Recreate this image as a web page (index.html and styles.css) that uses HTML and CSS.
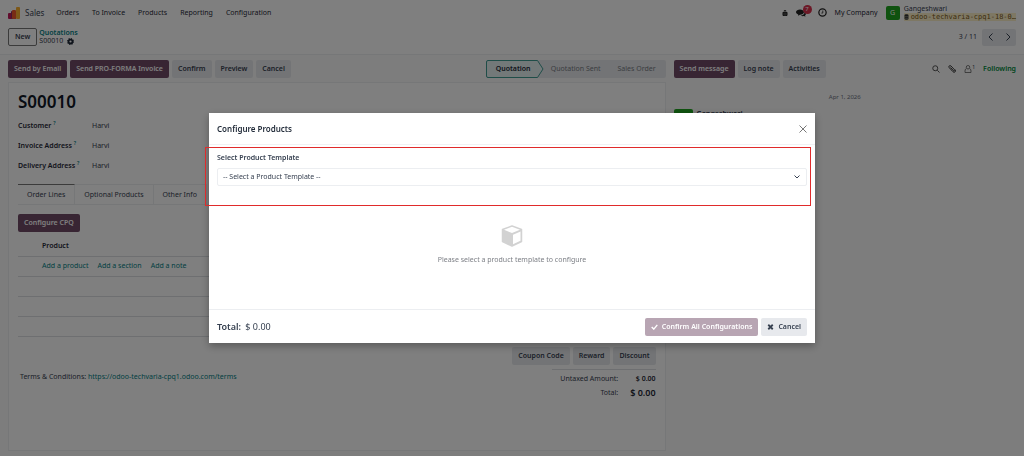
FILE: index.html
```
<!DOCTYPE html>
<html lang="en">
<head>
  <meta charset="UTF-8">
  <meta name="viewport" content="width=device-width, initial-scale=1">
  <title>Odoo - S00010</title>
  <link rel="stylesheet" href="styles.css">
</head>
<body>

<header class="navbar">
  <svg class="app-logo" viewBox="0 0 12 12">
    <rect x="0" y="6" width="4" height="6" rx="1" fill="#c2185b"/>
    <rect x="3" y="4" width="5" height="8" rx="1" fill="#8e2a5c"/>
    <rect x="4" y="3" width="4" height="9" rx="1" fill="#f0592a"/>
    <rect x="8" y="0" width="4" height="12" rx="1" fill="#fbb130"/>
  </svg>
  <a class="app-name" href="#">Sales</a>
  <nav class="menu">
    <a href="#">Orders</a>
    <a href="#">To Invoice</a>
    <a href="#">Products</a>
    <a href="#">Reporting</a>
    <a href="#">Configuration</a>
  </nav>
  <div class="systray">
    <button class="icon-btn" aria-label="Debug">
      <svg class="icon-bug" viewBox="0 0 12 14"><path d="M3 4a3 3 0 0 1 6 0zM2 5h8l1 1v5l-1 2H2l-1-2V6z" fill="#222"/><path d="M6 6v7M1 9h10" stroke="#777" stroke-width="1"/></svg>
    </button>
    <button class="icon-btn chat" aria-label="Messages">
      <svg class="icon-chat" viewBox="0 0 20 16"><path d="M8 1c4 0 8 2 8 5s-4 5.500-8 5.500L4 13.500 4.500 11C2 10 0 8.500 0 6c0-3 4-5 8-5z" fill="#222"/><path d="M17.500 6c0 4-4 6.500-8 7 2 1.500 5 1.500 6.500 1l3 1.500-1-2.500c3-2 2-5-.5-7z" fill="#222"/></svg>
      <span class="badge">7</span>
    </button>
    <button class="icon-btn" aria-label="Activities">
      <svg class="icon-clock" viewBox="0 0 16 16" fill="none" stroke="#222"><circle cx="8" cy="8" r="6.500" stroke-width="2.200"/><path d="M8.500 4.500V9H6" stroke-width="1.400"/></svg>
    </button>
    <a class="company" href="#">My Company</a>
    <span class="avatar">G</span>
    <div class="user">
      <span>Gangeshwari</span>
      <span class="db"><svg class="icon-db" viewBox="0 0 10 12"><path d="M1 2c0-2 8-2 8 0v8c0 2-8 2-8 0z" fill="#333"/><path d="M1 4.500c2 1 6 1 8 0M1 8c2 1 6 1 8 0" stroke="#bba" fill="none"/></svg>odoo-techvaria-cpq1-18-0…</span>
    </div>
  </div>
</header>

<div class="control-panel">
  <button class="btn btn-outline">New</button>
  <div class="breadcrumb">
    <a href="#">Quotations</a>
    <span class="current">S00010
      <svg class="icon-gear" viewBox="0 0 16 16"><circle cx="8" cy="8" r="4.500" fill="none" stroke="#1f2937" stroke-width="4"/><circle cx="8" cy="8" r="6.800" fill="none" stroke="#1f2937" stroke-width="2.400" stroke-dasharray="2.670 2.670"/></svg>
    </span>
  </div>
  <div class="pager">
    <span>3 / 11</span>
    <div class="pager-buttons">
      <button aria-label="Previous"><svg viewBox="0 0 8 8"><path d="M5.500 0.500L2 4l3.500 3.500"/></svg></button>
      <button aria-label="Next"><svg viewBox="0 0 8 8"><path d="M2.500 0.500L6 4 2.500 7.500"/></svg></button>
    </div>
  </div>
</div>

<main class="content">
  <section class="form-view">
    <div class="statusbar">
      <button class="btn btn-primary">Send by Email</button>
      <button class="btn btn-primary">Send PRO-FORMA Invoice</button>
      <button class="btn">Confirm</button>
      <button class="btn">Preview</button>
      <button class="btn">Cancel</button>
      <div class="stages">
        <span class="stage active">
          <svg class="stage-arrow" viewBox="0 0 58 18" preserveAspectRatio="none"><path d="M2 .5h49.500L57 9l-5.500 8.500H2Q.5 17.500.5 16V2Q.5.5 2 .5z" fill="#e6f2f3" stroke="#3f9a91"/></svg>
          <b>Quotation</b>
        </span>
        <span class="stage">Quotation Sent</span>
        <span class="stage">Sales Order</span>
      </div>
    </div>

    <div class="sheet">
      <h1>S00010</h1>
      <dl class="fields">
        <dt>Customer <sup>?</sup></dt><dd>Harvi</dd>
        <dt>Invoice Address <sup>?</sup></dt><dd>Harvi</dd>
        <dt>Delivery Address <sup>?</sup></dt><dd>Harvi</dd>
      </dl>

      <div class="tabs">
        <button class="tab active">Order Lines</button>
        <button class="tab">Optional Products</button>
        <button class="tab">Other Info</button>
      </div>

      <button class="btn btn-primary configure">Configure CPQ</button>

      <table class="lines">
        <thead>
          <tr><th>Product</th></tr>
        </thead>
        <tbody>
          <tr><td><a href="#">Add a product</a><a href="#">Add a section</a><a href="#">Add a note</a></td></tr>
          <tr><td></td></tr>
          <tr><td></td></tr>
          <tr><td></td></tr>
        </tbody>
      </table>

      <div class="promo">
        <button class="btn">Coupon Code</button>
        <button class="btn">Reward</button>
        <button class="btn">Discount</button>
      </div>
      <div class="summary">
        <p class="terms">Terms &amp; Conditions: <a href="#">https://odoo-techvaria-cpq1.odoo.com/terms</a></p>
        <dl class="totals">
          <dt>Untaxed Amount:</dt><dd>$ 0.00</dd>
          <dt>Total:</dt><dd class="grand">$ 0.00</dd>
        </dl>
      </div>
    </div>
  </section>

  <aside class="chatter">
    <div class="chatter-bar">
      <button class="btn btn-primary">Send message</button>
      <button class="btn">Log note</button>
      <button class="btn">Activities</button>
      <div class="chatter-tools">
        <button class="icon-btn" aria-label="Search"><svg viewBox="0 0 16 16" fill="none" stroke="#444" stroke-width="1.800"><circle cx="6.500" cy="6.500" r="5"/><path d="M10.500 10.500L15 15"/></svg></button>
        <button class="icon-btn" aria-label="Attach"><svg viewBox="0 0 16 16" fill="none" stroke="#333" stroke-width="1.900"><path d="M5 5l6 6.500c1.500 1.500 3.500-.5 2-2L6 2C3.500-.5 0 3 2.500 5.500l7.500 8c3 3 7-1 4-4.500"/></svg></button>
        <button class="icon-btn followers" aria-label="Followers"><svg viewBox="0 0 16 16" fill="none" stroke="#555" stroke-width="1.500"><circle cx="8" cy="4.500" r="3.500"/><path d="M4.500 7C2 8.500 2 11 2 15h12c0-4 0-6.500-2.500-8"/></svg><sup>1</sup></button>
        <a class="following" href="#">Following</a>
      </div>
    </div>
    <p class="date">Apr 1, 2026</p>
    <div class="message">
      <span class="avatar"></span>
      <b>Gangeshwari</b>
    </div>
  </aside>
</main>

<div class="backdrop">
  <div class="dialog" role="dialog" aria-labelledby="dialogTitle">
    <div class="dialog-header">
      <h2 id="dialogTitle">Configure Products</h2>
      <button class="close" aria-label="Close"><svg viewBox="0 0 8 8"><path d="M.5.5l7 7M7.500.5l-7 7"/></svg></button>
    </div>
    <div class="dialog-body">
      <label for="template">Select Product Template</label>
      <div class="select-wrap">
        <select id="template">
          <option>-- Select a Product Template --</option>
        </select>
        <svg class="chevron" viewBox="0 0 6 4"><path d="M.5.5L3 3 5.500.5"/></svg>
      </div>
      <div class="empty">
        <svg class="cube" viewBox="0 0 22 22"><path d="M11 1l9.500 3.500v12L11 21 1.500 16.500v-12z" fill="#d2d2d2" stroke="#d2d2d2" stroke-width="1.500" stroke-linejoin="round"/><path d="M11 1.800l8 3-8 3.200-8-3.200z" fill="#fff"/><path d="M12 9.800l7.500-3.200v9.200L12 19.300z" fill="#fff"/></svg>
        <p>Please select a product template to configure</p>
      </div>
    </div>
    <div class="dialog-footer">
      <span class="total"><b>Total:</b> $ 0.00</span>
      <button class="btn btn-primary" disabled><svg viewBox="0 0 10 8"><path d="M1 4l3 3 5-6" fill="none" stroke="#fff" stroke-width="2"/></svg>Confirm All Configurations</button>
      <button class="btn"><svg viewBox="0 0 8 8"><path d="M1 1l6 6M7 1L1 7" stroke="#374151" stroke-width="2.400"/></svg>Cancel</button>
    </div>
    <div class="highlight"></div>
  </div>
</div>

</body>
</html>
```
FILE: styles.css
```
* {
  box-sizing: border-box;
}
body {
  margin: 0;
  min-height: 100vh;
  display: flex;
  flex-direction: column;
  font-family: "Noto Sans", sans-serif;
  font-size: 7px;
  line-height: 10px;
  color: #374151;
  background: #fff;
}
h1, h2, p, dl, dd {
  margin: 0;
}
a {
  color: #017e84;
  text-decoration: none;
}
button, select {
  font: inherit;
  color: inherit;
}
button {
  border: 0;
  padding: 0;
  background: none;
  cursor: pointer;
}
svg {
  display: block;
}

/* Buttons */
.btn {
  display: flex;
  align-items: center;
  gap: 4px;
  height: 18px;
  padding: 0 6px;
  border-radius: 2px;
  background: #e7e9ed;
  font-weight: 600;
  white-space: nowrap;
}
.btn svg {
  width: 7px;
  height: 6px;
}
.btn-primary {
  background: #714b67;
  color: #fff;
}
.btn-primary:disabled {
  background: #b8a5b3;
}
.btn-outline {
  background: #fff;
  border: 1px solid #777;
}
.icon-btn svg {
  width: 8px;
  height: 8px;
}

/* Top bar */
.navbar {
  display: flex;
  align-items: center;
  height: 25px;
  padding: 0 8px;
}
.app-logo {
  width: 12px;
  height: 12px;
}
.app-name {
  margin: 0 12px 0 5px;
  font-size: 8px;
  color: #374151;
}
.menu {
  display: flex;
  gap: 13px;
}
.menu a, .company {
  color: #1f2937;
}
.systray {
  display: flex;
  align-items: center;
  gap: 8px;
  margin-left: auto;
}
.icon-btn .icon-bug {
  width: 6px;
}
.chat {
  position: relative;
  margin-right: 4px;
}
.icon-btn .icon-chat {
  width: 10px;
}
.icon-btn .icon-clock {
  width: 9px;
  height: 9px;
}
.badge {
  position: absolute;
  top: -4px;
  right: -6px;
  width: 9px;
  height: 9px;
  border-radius: 50%;
  background: #d9304c;
  color: #fff;
  font-size: 6px;
  line-height: 9px;
}
.avatar {
  width: 14px;
  height: 14px;
  border-radius: 2px;
  background: #1fa51f;
  color: #fff;
  line-height: 14px;
  text-align: center;
}
.user {
  display: flex;
  flex-direction: column;
  margin-left: -4px;
  line-height: 8px;
}
.db {
  display: flex;
  align-items: center;
  gap: 2px;
  background: #fdf0c8;
  color: #7a5a1a;
  font-family: "DejaVu Sans Mono", monospace;
}
.icon-db {
  width: 5px;
  height: 6px;
}

/* Breadcrumb and pager */
.control-panel {
  display: flex;
  align-items: center;
  gap: 2px;
  height: 30px;
  padding: 0 8px 5px;
  border-bottom: 1px solid #eceef1;
}
.breadcrumb {
  display: flex;
  flex-direction: column;
  line-height: 8px;
}
.breadcrumb a {
  font-weight: 600;
}
.current {
  display: flex;
  align-items: center;
  gap: 4px;
}
.icon-gear {
  width: 7px;
  height: 7px;
}
.pager {
  display: flex;
  align-items: center;
  gap: 5px;
  margin-left: auto;
}
.pager-buttons {
  display: flex;
  border-radius: 2px;
  background: #e7e9ed;
}
.pager-buttons button {
  width: 17px;
  height: 17px;
}
.pager-buttons svg {
  width: 8px;
  height: 8px;
  margin: auto;
  fill: none;
  stroke: #374151;
}

/* Form */
.content {
  flex: 1;
  display: grid;
  grid-template-columns: 65fr 35fr;
  background: #fafafa;
}
.form-view {
  display: flex;
  flex-direction: column;
  padding: 5px 0 5px 8px;
}
.statusbar, .chatter-bar {
  display: flex;
  align-items: center;
  gap: 3px;
}
.stages {
  display: flex;
  height: 18px;
  margin-left: auto;
  border-radius: 2px;
  background: #e7e9ed;
  color: #777b83;
}
.stage {
  position: relative;
  padding: 0 10px 0 7px;
  line-height: 18px;
}
.stage b {
  position: relative;
  font-weight: 600;
}
.stage.active {
  width: 58px;
  padding: 0 0 0 10px;
  color: #1f2937;
}
.stage-arrow {
  position: absolute;
  inset: 0;
  width: 100%;
  height: 100%;
}
.sheet {
  flex: 1;
  margin-top: 4px;
  padding: 9px;
  border: 1px solid #eceef1;
  background: #fff;
}
.sheet h1 {
  margin-bottom: 4px;
  font-size: 17px;
  line-height: 20px;
  font-weight: 600;
  color: #111827;
}
.fields {
  display: grid;
  grid-template-columns: 74px 1fr;
  line-height: 20px;
}
.fields dt {
  font-weight: 600;
  color: #1f2937;
}
.fields sup {
  font-size: 5px;
  line-height: 0;
  color: #017e84;
}
.tabs {
  display: flex;
  margin-top: 8px;
  border-bottom: 1px solid #eceef1;
}
.tab {
  height: 20px;
  padding: 0 9px;
  border-right: 1px solid #eceef1;
  border-top: 1px solid #eceef1;
}
.tab.active {
  border-top-color: #777;
}
.configure {
  margin-top: 9px;
}
.lines {
  width: 100%;
  margin-top: 4px;
  border-collapse: collapse;
}
.lines th, .lines td {
  height: 20px;
  padding: 0 0 0 24px;
  border-bottom: 1px solid #dcdfe3;
  text-align: left;
}
.lines th {
  font-weight: 600;
  color: #1f2937;
}
.lines a {
  margin-right: 9px;
}
.promo {
  display: flex;
  justify-content: flex-end;
  gap: 3px;
  margin-top: 10px;
}
.summary {
  display: flex;
  justify-content: space-between;
  align-items: flex-start;
}
.terms {
  padding: 7px 2px;
}
.totals {
  display: grid;
  grid-template-columns: 1fr auto;
  gap: 0 12px;
  margin-top: 4px;
  padding-top: 2px;
  width: 104px;
  border-top: 1px solid #dcdfe3;
  line-height: 14px;
  text-align: right;
}
.totals dd {
  font-weight: 600;
  color: #1f2937;
}
.totals .grand {
  font-size: 9px;
}

/* Chatter */
.chatter {
  padding: 5px 8px;
}
.chatter-tools {
  display: flex;
  align-items: center;
  gap: 8px;
  margin-left: auto;
}
.followers {
  display: flex;
}
.followers sup {
  font-size: 5px;
  line-height: 5px;
}
.following {
  color: #008a3c;
  font-weight: 600;
}
.date {
  margin-top: 14px;
  font-size: 6px;
  text-align: center;
  color: #6b7280;
}
.message {
  display: flex;
  gap: 4px;
  margin-top: 7px;
}
.message .avatar {
  width: 19px;
  height: 19px;
}

/* Dialog */
.backdrop {
  position: fixed;
  inset: 0;
  display: flex;
  align-items: center;
  justify-content: center;
  background: rgba(0, 0, 0, 0.5);
}
.dialog {
  position: relative;
  width: 100%;
  max-width: 606px;
  background: #fff;
  box-shadow: 0 3px 8px rgba(0, 0, 0, 0.3);
}
.dialog-header {
  display: flex;
  align-items: center;
  justify-content: space-between;
  height: 32px;
  padding: 0 8px;
  border-bottom: 1px solid #f1f2f4;
}
.dialog-header h2 {
  font-size: 8px;
  font-weight: 600;
  color: #1f2937;
}
.close svg {
  width: 8px;
  height: 8px;
  fill: none;
  stroke: #777;
}
.dialog-body {
  padding: 8px 8px 44px;
}
.dialog-body label {
  display: block;
  margin-bottom: 5px;
  font-weight: 600;
}
.select-wrap {
  position: relative;
}
.select-wrap select {
  display: block;
  width: 100%;
  height: 18px;
  padding: 0 5px;
  border: 1px solid #eceef1;
  border-radius: 2px;
  background: #fff;
  appearance: none;
}
.chevron {
  position: absolute;
  top: 7px;
  right: 7px;
  width: 6px;
  height: 4px;
  fill: none;
  stroke: #374151;
}
.empty {
  display: flex;
  flex-direction: column;
  align-items: center;
  gap: 8px;
  margin-top: 39px;
  color: #7c7f85;
}
.cube {
  width: 22px;
  height: 22px;
}
.dialog-footer {
  display: flex;
  align-items: center;
  gap: 3px;
  height: 34px;
  padding: 0 8px;
  border-top: 1px solid #eceef1;
}
.total {
  margin-right: auto;
  font-size: 9px;
}
.total b {
  margin-right: 2px;
  font-weight: 600;
}
.highlight {
  position: absolute;
  top: 34px;
  left: -4px;
  right: 4px;
  height: 59px;
  border: 1px solid #e02b2b;
  pointer-events: none;
}
```
